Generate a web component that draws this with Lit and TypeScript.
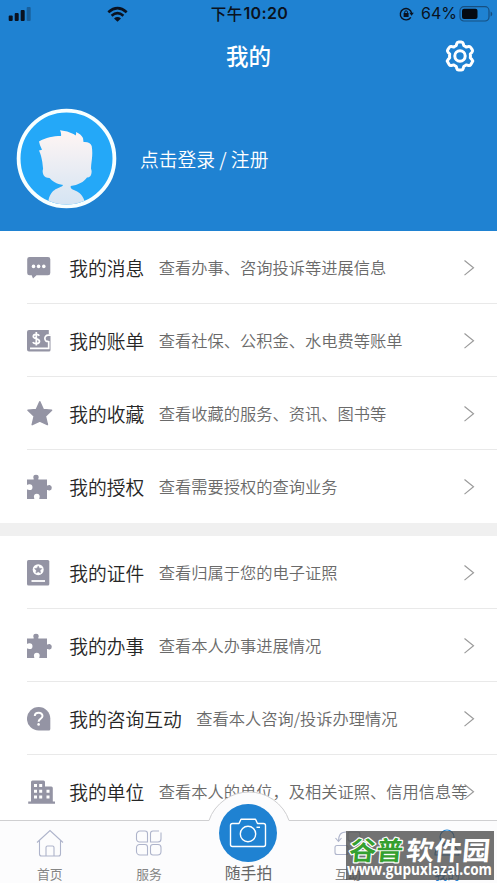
import { LitElement, html, css, svg } from "lit";
import { customElement, property } from "lit/decorators.js";

const puzzle = svg`<path d="M0 6.500h6.600c.5-.6-.3-1.200-.3-2.200a2.700 2.500 0 0 1 5.400 0c0 1-.8 1.600-.3 2.200H20v5.700c.6.7 1.300-.3 2.600-.3a2.700 2.900 0 0 1 0 5.700c-1.300 0-2-1-2.600-.3V26h-7.500c-.7-.8.200-1.300.2-2.300a2.900 2.900 0 0 0-5.800 0c0 1 .9 1.500.2 2.300H0v-9.300c.7-.5 1.300.4 2.600.4a2.900 2.900 0 0 0 0-5.800c-1.300 0-1.900.9-2.600.4z"/>`;

const icons: Record<string, unknown> = {
  message: svg`<path d="M2.500 3h18.500a2.300 2.300 0 0 1 2.300 2.300v13.600a2.300 2.300 0 0 1-2.300 2.300H9.500L6 24.500 4.700 21.200H2.500a2.300 2.300 0 0 1-2.300-2.300V5.300A2.300 2.300 0 0 1 2.500 3z"/><g fill="#fff"><circle cx="6.500" cy="12.400" r="1.800"/><circle cx="11.600" cy="12.400" r="1.800"/><circle cx="16.800" cy="12.400" r="1.800"/></g>`,
  bill: svg`<path d="M2 3h19.800v4.500h1.700V23a1.500 1.500 0 0 1-1.500 1.500H2a2 2 0 0 1-2-2V5a2 2 0 0 1 2-2z"/><g fill="none" stroke="#fff" stroke-width="1.700"><path d="M12.300 8.700c-1-1.700-6-1.900-6 .9 0 3 6.200 1.600 6.200 4.700 0 3-5.500 2.900-6.700.8M9.300 5v13.500"/><path d="M24 8.200h-2.800c-4.500 0-4.500 7 .3 6.200M21.700 14v7.300H3"/></g>`,
  star: svg`<path d="M12.800 1.800l3.500 7.700 8.300.8-6.200 5.800 2 8.500-7.600-3.600-7.600 3.600 2-8.500L1 10.300l8.300-.8z" stroke="#9494a4" stroke-width="1.500" stroke-linejoin="round"/>`,
  puzzle,
  card: svg`<rect x="0" y="1" width="22.300" height="25.500" rx="1.500"/><circle cx="11.200" cy="10.700" r="5.500" fill="#fff"/><path d="M11.200 6.900l1.200 2.300 2.500.4-1.800 1.800.4 2.600-2.300-1.200-2.300 1.200.4-2.600-1.800-1.800 2.500-.4z" stroke="#9494a4" stroke-width=".5"/><path d="M4.500 22h13.500" stroke="#fff" stroke-width="1.800"/>`,
  question: svg`<path d="M11.700 2a11.600 11.600 0 0 1 11.600 11.600V24a1.500 1.500 0 0 1-1.500 1.500H11.700A11.700 11.700 0 0 1 11.700 2z"/><path d="M7.800 11c.2-4.300 7.800-4.200 7.700 0 0 2.700-3.900 2.900-3.900 5.800" fill="none" stroke="#fff" stroke-width="2"/><circle cx="11.600" cy="19.400" r="1.300" fill="#fff"/>`,
  building: svg`<path d="M4 23.500V4a1.500 1.500 0 0 1 1.500-1.500h11A1.500 1.500 0 0 1 18 4v4.500h6.300a1.500 1.500 0 0 1 1.500 1.500v13.500H28v2.300H1.200v-2.300z"/><g fill="#fff"><path d="M7 6h3v3H7zM12.200 6h3v3h-3zM7 11.700h3v3H7zM12.200 11.700h3v3h-3zM7 17.500h3v3H7zM12.200 17.500h3v3h-3zM19.500 11.700h3v3h-3zM19.500 17.500h3v3h-3z"/></g>`,
  home: svg`<path d="M1 14.500L14 2.500l13 12M3.500 12.500V26a2 2 0 0 0 2 2h17a2 2 0 0 0 2-2V12.500M10 28v-8.500a1.500 1.500 0 0 1 1.500-1.500h5a1.500 1.500 0 0 1 1.500 1.500V28"/>`,
  services: svg`<path d="M5 3h5a2.500 2.500 0 0 1 2.500 2.500V14H4.500A3 3 0 0 1 1.500 11V6.500A3.500 3.500 0 0 1 5 3zM26 4.500V11a3 3 0 0 1-3 3h-7.500V5.500A2.500 2.500 0 0 1 18 3h6M4.500 16.500H10a2.500 2.500 0 0 1 2.500 2.500v8H5a3.500 3.500 0 0 1-3.500-3.500v-4a3 3 0 0 1 3-3zM18 16.500h5a3 3 0 0 1 3 3v4a3.500 3.500 0 0 1-3.500 3.500H18a2.500 2.500 0 0 1-2.500-2.500V19a2.500 2.500 0 0 1 2.500-2.500z"/>`,
  interact: svg`<rect x="1" y="17.500" width="13" height="9" rx="2"/><rect x="14" y="4" width="12" height="9" rx="2"/><path d="M12 4C6 4 4.500 8 4.500 13M1.500 10l3 3.500 3-3.500M16 26c5 0 7-3 7-8"/>`,
  person: svg`<circle cx="14" cy="9" r="7"/><path d="M2 27c0-14 24-14 24 0z"/>`,
};

@customElement("menu-row")
class MenuRow extends LitElement {
  @property() icon = "";
  @property() label = "";
  @property() note = "";
  static styles = css`
    :host { display: flex; align-items: center; height: 73px; margin-left: 26.500px; padding-top: 1px; box-sizing: border-box; border-bottom: 1px solid #e9e9e9; white-space: nowrap; }
    :host(.last) { border-bottom-color: transparent; }
    .glyph { width: 29px; height: 28px; flex: none; fill: #9494a4; }
    .label { margin-left: 13.700px; font-size: 18.750px; font-weight: 350; color: #262626; line-height: 28px; }
    .note { margin-left: 14.500px; font-size: 16.250px; font-weight: 350; color: #6a6a6a; line-height: 28px; padding-bottom: 1px; flex: 1; width: 0; }
    .chevron { width: 12px; height: 18px; flex: none; margin-right: 22.500px; fill: none; stroke: #9b9b9b; stroke-width: 1.200; }
  `;
  render() {
    return html`<svg class="glyph" viewBox="0 0 29 28">${icons[this.icon]}</svg>
      <span class="label">${this.label}</span><span class="note">${this.note}</span>
      <svg class="chevron" viewBox="0 0 12 18"><path d="M1.500 1.500l9 7.300-9 7.300"/></svg>`;
  }
}

@customElement("tab-item")
class TabItem extends LitElement {
  @property() icon = "";
  @property() label = "";
  static styles = css`
    :host { display: flex; flex-direction: column; align-items: center; padding-top: 8px; color: #858585; stroke: #aeb4cb; }
    :host(.active) { color: #1f82d2; stroke: #1f82d2; }
    svg { width: 28px; height: 30px; fill: none; stroke-width: 1.100; }
    span { font-size: 12.800px; line-height: 18px; margin-top: 7px; stroke: none; }
  `;
  render() {
    return html`<svg viewBox="0 0 28 30">${icons[this.icon]}</svg><span>${this.label}</span>`;
  }
}

@customElement("app-root")
class AppRoot extends LitElement {
  static styles = css`
    :host { display: flex; flex-direction: column; position: relative; width: 497px; height: 883px; overflow: hidden; background: #fff; font-family: "Noto Sans CJK SC", sans-serif; }
    .head { height: 231px; flex: none; background: #1f82d2; color: #fff; }
    .status { height: 27px; display: grid; grid-template-columns: 1fr auto 1fr; align-items: center; color: #0a1220; }
    .left { display: flex; align-items: center; padding-left: 8px; gap: 76px; }
    .time { font: 600 16px/27px Inter, "Noto Sans CJK SC", sans-serif; letter-spacing: .35px; display: flex; align-items: center; gap: 1px; padding-left: 2px; }
    .time span { font: 500 15.500px/27px "Noto Sans CJK SC", sans-serif; }
    .right { display: flex; align-items: center; justify-content: flex-end; padding-right: 3px; }
    .percent { font: 400 16px/27px Inter, sans-serif; margin: 0 2px 0 7px; }
    .nav { height: 56px; display: grid; grid-template-columns: 1fr auto 1fr; align-items: center; }
    .title { grid-column: 2; font-size: 22.500px; font-weight: 500; line-height: 32px; }
    .gear { justify-self: end; margin-right: 21px; margin-top: 1px; }
    .user { display: flex; align-items: center; padding: 24.500px 0 0 16.300px; gap: 22.700px; font-size: 18.800px; font-weight: 350; }
    .divider { height: 13px; flex: none; background: #f0f0f0; }
    .list { flex: none; }
    svg { display: block; flex: none; }
    .bar { position: absolute; left: 0; right: 0; bottom: 0; height: 92px; display: grid; grid-template-rows: 29px 63px; }
    .shape { position: absolute; left: 0; top: 0; }
    .tabs { grid-row: 2; display: grid; grid-template-columns: repeat(5, 1fr); position: relative; }
    .snap { display: flex; flex-direction: column; align-items: center; margin-top: -16px; color: #666; font-size: 15.800px; line-height: 22px; }
    .mark { position: absolute; right: 3px; bottom: 3px; }
    .zh { font: 700 26px "Noto Sans CJK SC", sans-serif; }
    .url { font: 700 16px "Open Sans", sans-serif; }
  `;

  render() {
    return html`
      <div class="head">
        <div class="status">
          <div class="left">
            <svg width="23" height="16" viewBox="0 0 23 16" fill="#0a1220"><rect x=".7" y="9.500" width="4" height="5.500" rx="1"/><rect x="6.700" y="7" width="4" height="8" rx="1"/><rect x="12.700" y="4" width="4" height="11" rx="1"/><rect x="18.700" y="1" width="4" height="14" rx="1" opacity=".3"/></svg>
            <svg width="21" height="16" viewBox="0 0 21 16" fill="none" stroke="#0a1220" stroke-width="2.600"><path d="M1.300 6.200q9.200-8.200 18.400 0M4.600 9.700q5.900-5 11.800 0"/><path d="M7 12.400q3.500-2.800 7 0l-3.500 3.300z" fill="#0a1220" stroke="none"/></svg>
          </div>
          <div class="time"><span>下午</span>10:20</div>
          <div class="right">
            <svg width="15" height="14" viewBox="0 0 15 14" fill="none" stroke="#0a1220" stroke-width="1.400"><path d="M11.800 10.300A5.700 5.700 0 1 1 12.600 6"/><path d="M10.300 5.800h4.500l-2.200 3z" fill="#0a1220" stroke="none"/><rect x="4.600" y="6" width="5" height="4" fill="#0a1220" stroke="none"/><path d="M5.700 6.200V5.200a1.400 1.400 0 0 1 2.800 0v1" stroke-width="1"/></svg>
            <span class="percent">64%</span>
            <svg width="35" height="16" viewBox="0 0 35 16"><rect x="1" y=".7" width="29" height="14.300" rx="4" fill="none" stroke="#0a1220" stroke-opacity=".45" stroke-width="1.200"/><rect x="3" y="2.800" width="15.500" height="10.200" rx="2" fill="#050a12"/><path d="M31.600 5.500v5q1.700-.7 1.700-2.500t-1.700-2.500z" fill="#0a1220" opacity=".45"/></svg>
          </div>
        </div>
        <div class="nav">
          <div class="title">我的</div>
          <svg class="gear" width="32" height="32" viewBox="0 0 32 32" fill="none" stroke="#fff" stroke-width="3" stroke-linejoin="round"><path d="M12.800 3.500q.4-1.500 1.800-1.500h2.800q1.400 0 1.800 1.500l.6 2.200q1.300.5 2.400 1.400l2.300-.6q1.400-.4 2.100.8l1.700 2.600q.8 1.300-.3 2.400L26.300 14q.3 1.900 0 3.800l1.700 1.800q1.100 1.100.3 2.400l-1.600 2.700q-.7 1.200-2.200.8l-2.300-.6q-1.100.9-2.400 1.400l-.6 2.200q-.4 1.500-1.800 1.500h-2.800q-1.400 0-1.800-1.500l-.6-2.200q-1.300-.5-2.400-1.400l-2.300.6q-1.500.4-2.200-.8L3.700 22q-.8-1.300.3-2.400l1.700-1.800q-.3-1.900 0-3.800L4 12.300q-1.100-1.100-.3-2.400l1.700-2.600q.7-1.200 2.100-.8l2.300.6q1.100-.9 2.400-1.400z"/><circle cx="16" cy="16" r="5.200"/></svg>
        </div>
        <div class="user">
          <svg width="101" height="101" viewBox="0 0 101 101">
            <defs><linearGradient id="face" x1="0" y1="0" x2="0" y2="1"><stop offset="0" stop-color="#fff5f3"/><stop offset="1" stop-color="#d4e4f3"/></linearGradient><clipPath id="disc"><circle cx="50.500" cy="50.500" r="46"/></clipPath></defs>
            <circle cx="50.500" cy="50.500" r="47.900" fill="#24a8f8" stroke="#f8ffff" stroke-width="3.800"/>
            <g clip-path="url(#disc)"><path fill="url(#face)" d="M26.300 54C25.500 50 25 46.500 23 42.500l3-.8Q23.500 37 23 33.500c7-4 14-5.500 22-5.500q.5-3-1-5.700 7.500.7 14 4l1.500 1.200q1-1.500.5-3.500 5 2 7 6l.5 4q6.500-.5 8.200 4c1.200 7 .3 13-.5 19l-.2 3.500q1.500 4-.5 7.500-1.500 1.500-3.500 1.500c-3 4.500-9 7.500-16.300 8.500v1.500c1.500 4 11 1.500 14.500 15.500V98H32.500v-6c3.500-14 13.500-11 14.700-15.500V77C40.500 76 36 73 33.500 70q-4.500 0-6-3-1.500-3.500-.4-6z"/></g>
          </svg>
          <span>点击登录 / 注册</span>
        </div>
      </div>
      <div class="list">
        <menu-row icon="message" label="我的消息" note="查看办事、咨询投诉等进展信息"></menu-row>
        <menu-row icon="bill" label="我的账单" note="查看社保、公积金、水电费等账单"></menu-row>
        <menu-row icon="star" label="我的收藏" note="查看收藏的服务、资讯、图书等"></menu-row>
        <menu-row class="last" icon="puzzle" label="我的授权" note="查看需要授权的查询业务"></menu-row>
      </div>
      <div class="divider"></div>
      <div class="list">
        <menu-row icon="card" label="我的证件" note="查看归属于您的电子证照"></menu-row>
        <menu-row icon="puzzle" label="我的办事" note="查看本人办事进展情况"></menu-row>
        <menu-row icon="question" label="我的咨询互动" note="查看本人咨询/投诉办理情况"></menu-row>
        <menu-row class="last" icon="building" label="我的单位" note="查看本人的单位，及相关证照、信用信息等"></menu-row>
      </div>
      <div class="bar">
        <svg class="shape" width="497" height="92" viewBox="0 0 497 92"><path d="M-2 29.500H209Q213 17 225 8.500a42.300 42.300 0 0 1 48 0Q285 17 289 29.500H499V94H-2z" fill="#fcfcfd" stroke="#cfcfd1"/></svg>
        <div class="tabs">
          <tab-item icon="home" label="首页"></tab-item>
          <tab-item icon="services" label="服务"></tab-item>
          <div class="snap">
            <svg width="58" height="58" viewBox="0 0 58 58" fill="none" stroke="#fff" stroke-width="1.400" stroke-linejoin="round"><circle cx="29" cy="29" r="29" fill="#1f82d2" stroke="none"/><path d="M13.500 19.500h6.500l2-4.300h14.500l2 4.300h6q2 0 2 2v19q0 2-2 2h-31q-2 0-2-2v-19q0-2 2-2z"/><circle cx="29" cy="30" r="7.700"/><path d="M37.500 23.300h3.500"/></svg>
            <span>随手拍</span>
          </div>
          <tab-item icon="interact" label="互动"></tab-item>
          <tab-item class="active" icon="person" label="我的"></tab-item>
        </div>
      </div>
      <svg class="mark" width="148" height="49" viewBox="0 0 148 49">
        <rect width="148" height="49" fill="#4a4a4a" fill-opacity=".78"/>
        <g class="zh" transform="skewX(-5)" paint-order="stroke" stroke-linejoin="round"><text x="5" y="28.500" textLength="54" lengthAdjust="spacingAndGlyphs" fill="#35a02f" stroke="#fff" stroke-width="2.400">谷普</text><text x="62" y="28.500" textLength="84" lengthAdjust="spacingAndGlyphs" fill="#fff">软件园</text></g>
        <text class="url" x="1" y="44" textLength="145" lengthAdjust="spacingAndGlyphs" fill="#fff">www.gupuxlazal.com</text>
      </svg>
    `;
  }
}
